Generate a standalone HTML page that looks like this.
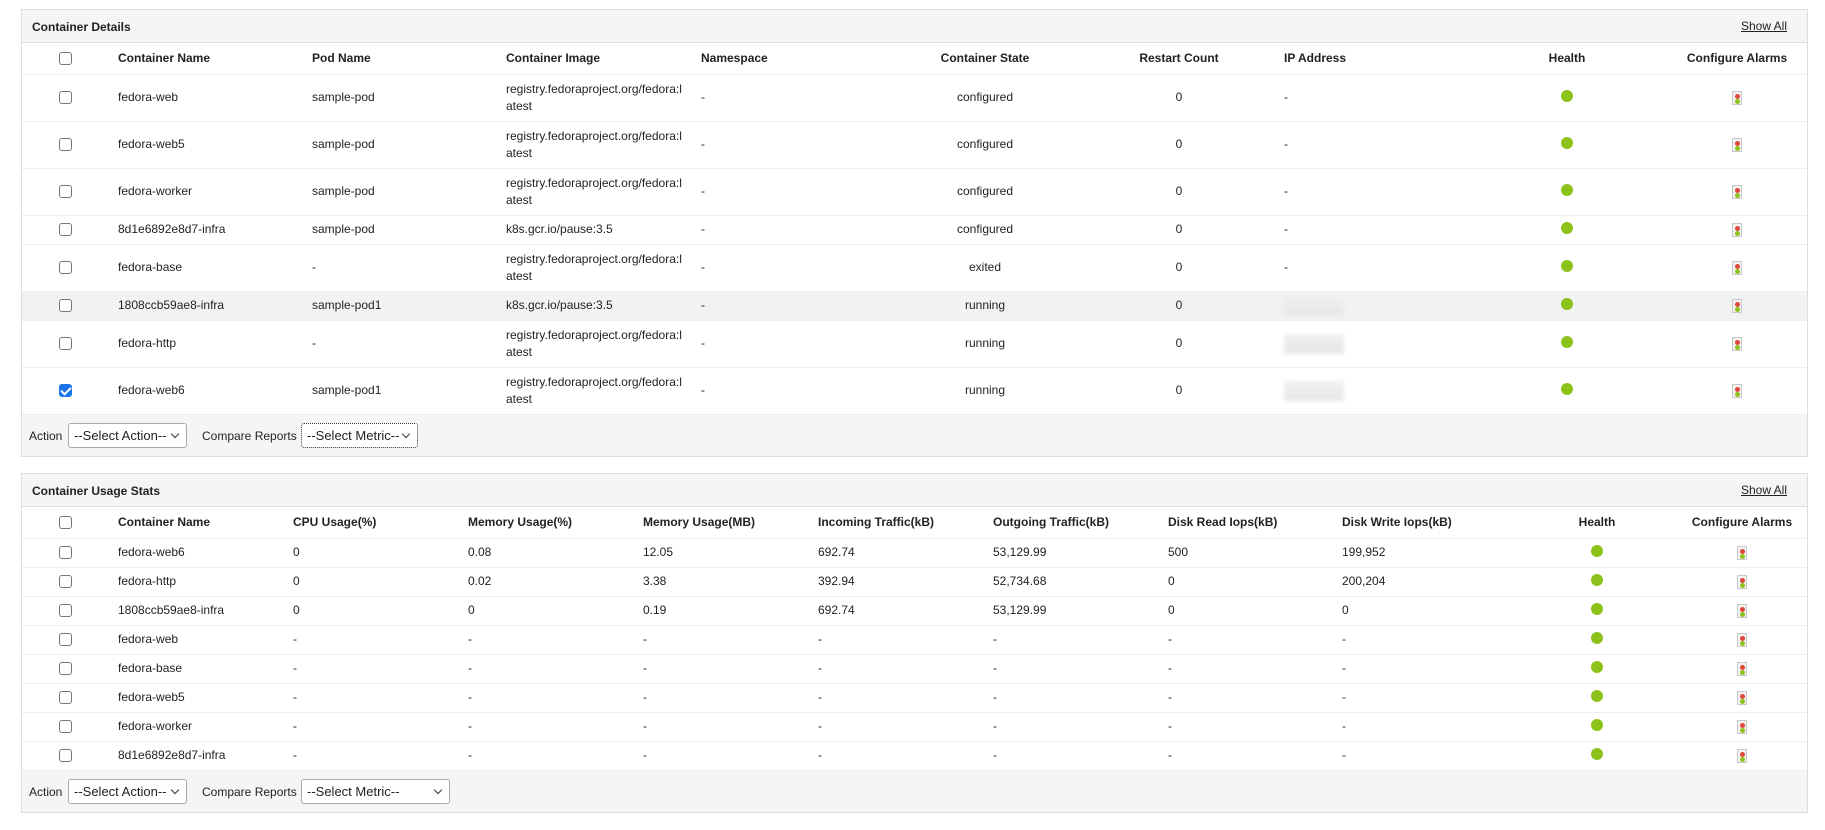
<!DOCTYPE html>
<html><head><meta charset="utf-8"><style>
*{box-sizing:border-box;margin:0;padding:0}
body{width:1825px;height:830px;background:#fff;font-family:"Liberation Sans",Arial,sans-serif;font-size:12px;color:#222;position:relative;overflow:hidden}
.panel{position:absolute;left:21px;width:1787px;border:1px solid #ddd;background:#fff}
.ph{height:33px;background:#f5f5f5;border-bottom:1px solid #ddd;position:relative}
.ph b{position:absolute;left:10px;top:10px;font-size:12px}
.ph u{position:absolute;right:20px;top:9px;font-size:12px;color:#222}
table{border-collapse:collapse;table-layout:fixed;width:1785px}
td,th{padding:0 0 0 10px;text-align:left;white-space:nowrap;border-bottom:1px solid #eee;vertical-align:middle;line-height:17px}
th{font-weight:bold;font-size:12px}
td.c,th.c{text-align:center;padding:0}
td.k,th.k{text-align:center;padding:0}
.cb{display:inline-block;width:13px;height:13px;border:1px solid #767676;border-radius:3px;background:#fff;vertical-align:middle}
.cb.on{background:#1a73e8;border-color:#1a73e8;position:relative}
.cb.on:after{content:"";position:absolute;left:3px;top:0px;width:4px;height:8px;border:solid #fff;border-width:0 2px 2px 0;transform:rotate(45deg)}
.dot{display:inline-block;width:12px;height:12px;border-radius:50%;background:#8cc21a;vertical-align:middle;position:relative;top:-2px}
.al{display:inline-block;width:10px;height:14px;border:1px solid #c8c8c8;background:#f2f2f2;position:relative;vertical-align:middle}
.al:before{content:"";position:absolute;left:2px;top:2px;width:5px;height:5px;border-radius:50%;background:#e0463a}
.al:after{content:"";position:absolute;left:2px;top:7px;width:5px;height:5px;border-radius:50%;background:#8cc21a}
.ip{display:inline-block;width:60px;height:20px;background:linear-gradient(#f0f0f0,#e6e6e6);filter:blur(2px);vertical-align:middle}
.ft{height:41px;background:#f5f5f5;position:relative;font-size:12px}
.ft span{position:absolute;top:14px}
.sel{position:absolute;top:8px;height:25px;border:1px solid #aaa;border-radius:3px;background:#fff;font-size:13px;padding:4px 0 0 5px}
.sel:after{content:"";position:absolute;right:8px;top:7px;width:5px;height:5px;border:solid #333;border-width:0 1.5px 1.5px 0;transform:rotate(45deg)}
.hov td{background:#f2f2f2}
</style></head><body>

<div class="panel" style="top:9px">
<div class="ph"><b>Container Details</b><u>Show All</u></div>
<table>
<colgroup><col style="width:86px"><col style="width:194px"><col style="width:194px"><col style="width:195px"><col style="width:195px"><col style="width:198px"><col style="width:190px"><col style="width:193px"><col style="width:200px"><col style="width:140px"></colgroup>
<tr style="height:31px"><th class="k"><span class="cb"></span></th><th>Container Name</th><th>Pod Name</th><th>Container Image</th><th>Namespace</th><th class="c">Container State</th><th class="c">Restart Count</th><th>IP Address</th><th class="c">Health</th><th class="c">Configure Alarms</th></tr>
<tr style="height:47px"><td class="k"><span class="cb"></span></td><td>fedora-web</td><td>sample-pod</td><td>registry.fedoraproject.org/fedora:l<br>atest</td><td>-</td><td class="c">configured</td><td class="c">0</td><td>-</td><td class="c"><span class="dot"></span></td><td class="c"><span class="al"></span></td></tr>
<tr style="height:47px"><td class="k"><span class="cb"></span></td><td>fedora-web5</td><td>sample-pod</td><td>registry.fedoraproject.org/fedora:l<br>atest</td><td>-</td><td class="c">configured</td><td class="c">0</td><td>-</td><td class="c"><span class="dot"></span></td><td class="c"><span class="al"></span></td></tr>
<tr style="height:47px"><td class="k"><span class="cb"></span></td><td>fedora-worker</td><td>sample-pod</td><td>registry.fedoraproject.org/fedora:l<br>atest</td><td>-</td><td class="c">configured</td><td class="c">0</td><td>-</td><td class="c"><span class="dot"></span></td><td class="c"><span class="al"></span></td></tr>
<tr style="height:29px"><td class="k"><span class="cb"></span></td><td>8d1e6892e8d7-infra</td><td>sample-pod</td><td>k8s.gcr.io/pause:3.5</td><td>-</td><td class="c">configured</td><td class="c">0</td><td>-</td><td class="c"><span class="dot"></span></td><td class="c"><span class="al"></span></td></tr>
<tr style="height:47px"><td class="k"><span class="cb"></span></td><td>fedora-base</td><td>-</td><td>registry.fedoraproject.org/fedora:l<br>atest</td><td>-</td><td class="c">exited</td><td class="c">0</td><td>-</td><td class="c"><span class="dot"></span></td><td class="c"><span class="al"></span></td></tr>
<tr class="hov" style="height:29px"><td class="k"><span class="cb"></span></td><td>1808ccb59ae8-infra</td><td>sample-pod1</td><td>k8s.gcr.io/pause:3.5</td><td>-</td><td class="c">running</td><td class="c">0</td><td><span class="ip"></span></td><td class="c"><span class="dot"></span></td><td class="c"><span class="al"></span></td></tr>
<tr style="height:47px"><td class="k"><span class="cb"></span></td><td>fedora-http</td><td>-</td><td>registry.fedoraproject.org/fedora:l<br>atest</td><td>-</td><td class="c">running</td><td class="c">0</td><td><span class="ip"></span></td><td class="c"><span class="dot"></span></td><td class="c"><span class="al"></span></td></tr>
<tr style="height:47px"><td class="k"><span class="cb on"></span></td><td>fedora-web6</td><td>sample-pod1</td><td>registry.fedoraproject.org/fedora:l<br>atest</td><td>-</td><td class="c">running</td><td class="c">0</td><td><span class="ip"></span></td><td class="c"><span class="dot"></span></td><td class="c"><span class="al"></span></td></tr>
</table>
<div class="ft"><span style="left:7px">Action</span><div class="sel" style="left:46px;width:119px">--Select Action--</div><span style="left:180px">Compare Reports</span><div class="sel" style="left:279px;width:117px;border:1px dotted #333">--Select Metric--</div></div>
</div>

<div class="panel" style="top:473px">
<div class="ph"><b>Container Usage Stats</b><u>Show All</u></div>
<table>
<colgroup><col style="width:86px"><col style="width:175px"><col style="width:175px"><col style="width:175px"><col style="width:175px"><col style="width:175px"><col style="width:175px"><col style="width:174px"><col style="width:185px"><col style="width:160px"><col style="width:130px"></colgroup>
<tr style="height:31px"><th class="k"><span class="cb"></span></th><th>Container Name</th><th>CPU Usage(%)</th><th>Memory Usage(%)</th><th>Memory Usage(MB)</th><th>Incoming Traffic(kB)</th><th>Outgoing Traffic(kB)</th><th>Disk Read Iops(kB)</th><th>Disk Write Iops(kB)</th><th class="c">Health</th><th class="c">Configure Alarms</th></tr>
<tr style="height:29px"><td class="k"><span class="cb"></span></td><td>fedora-web6</td><td>0</td><td>0.08</td><td>12.05</td><td>692.74</td><td>53,129.99</td><td>500</td><td>199,952</td><td class="c"><span class="dot"></span></td><td class="c"><span class="al"></span></td></tr>
<tr style="height:29px"><td class="k"><span class="cb"></span></td><td>fedora-http</td><td>0</td><td>0.02</td><td>3.38</td><td>392.94</td><td>52,734.68</td><td>0</td><td>200,204</td><td class="c"><span class="dot"></span></td><td class="c"><span class="al"></span></td></tr>
<tr style="height:29px"><td class="k"><span class="cb"></span></td><td>1808ccb59ae8-infra</td><td>0</td><td>0</td><td>0.19</td><td>692.74</td><td>53,129.99</td><td>0</td><td>0</td><td class="c"><span class="dot"></span></td><td class="c"><span class="al"></span></td></tr>
<tr style="height:29px"><td class="k"><span class="cb"></span></td><td>fedora-web</td><td>-</td><td>-</td><td>-</td><td>-</td><td>-</td><td>-</td><td>-</td><td class="c"><span class="dot"></span></td><td class="c"><span class="al"></span></td></tr>
<tr style="height:29px"><td class="k"><span class="cb"></span></td><td>fedora-base</td><td>-</td><td>-</td><td>-</td><td>-</td><td>-</td><td>-</td><td>-</td><td class="c"><span class="dot"></span></td><td class="c"><span class="al"></span></td></tr>
<tr style="height:29px"><td class="k"><span class="cb"></span></td><td>fedora-web5</td><td>-</td><td>-</td><td>-</td><td>-</td><td>-</td><td>-</td><td>-</td><td class="c"><span class="dot"></span></td><td class="c"><span class="al"></span></td></tr>
<tr style="height:29px"><td class="k"><span class="cb"></span></td><td>fedora-worker</td><td>-</td><td>-</td><td>-</td><td>-</td><td>-</td><td>-</td><td>-</td><td class="c"><span class="dot"></span></td><td class="c"><span class="al"></span></td></tr>
<tr style="height:29px"><td class="k"><span class="cb"></span></td><td>8d1e6892e8d7-infra</td><td>-</td><td>-</td><td>-</td><td>-</td><td>-</td><td>-</td><td>-</td><td class="c"><span class="dot"></span></td><td class="c"><span class="al"></span></td></tr>
</table>
<div class="ft"><span style="left:7px">Action</span><div class="sel" style="left:46px;width:119px">--Select Action--</div><span style="left:180px">Compare Reports</span><div class="sel" style="left:279px;width:149px">--Select Metric--</div></div>
</div>
</body></html>
